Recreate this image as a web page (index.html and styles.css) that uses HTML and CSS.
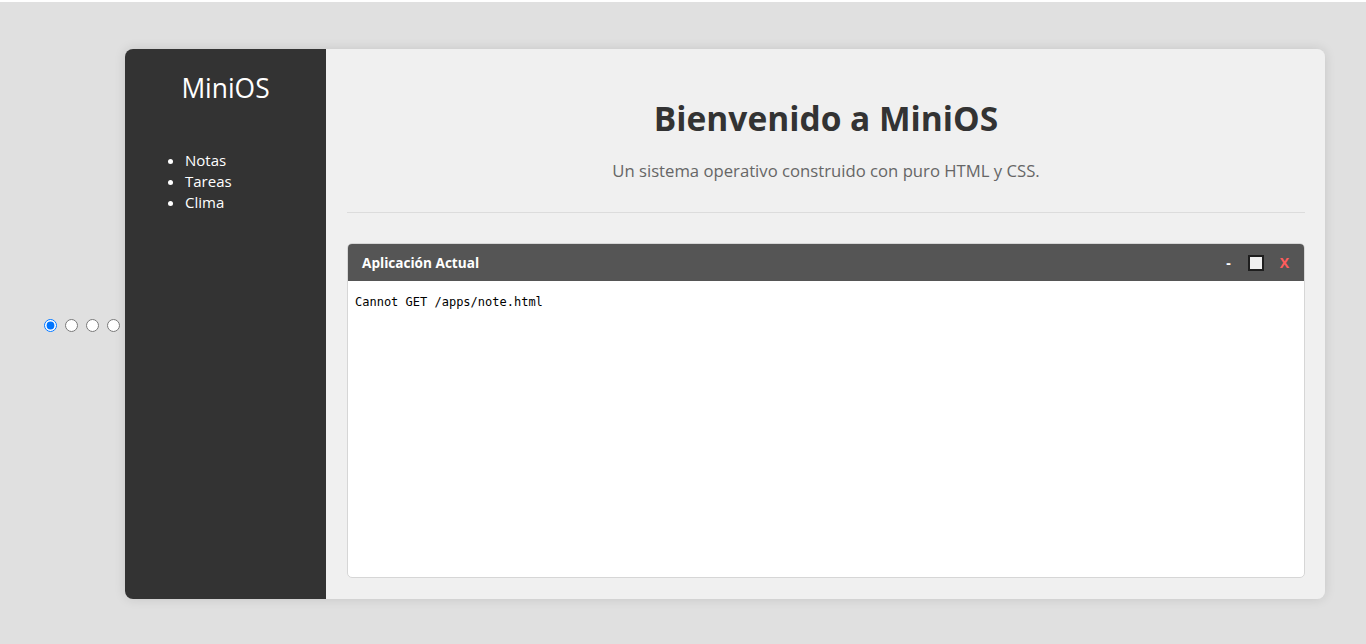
FILE: index.html
```html
<!DOCTYPE html>
<html lang="es">
<head>
<meta charset="utf-8">
<title>MiniOS</title>
<link rel="stylesheet" href="styles.css">
</head>
<body>
  <div class="switches">
    <input type="radio" name="app" checked>
    <input type="radio" name="app">
    <input type="radio" name="app">
    <input type="radio" name="app">
  </div>
  <div class="os">
    <aside class="sidebar">
      <h2 class="logo">MiniOS</h2>
      <ul class="menu">
        <li>Notas</li>
        <li>Tareas</li>
        <li>Clima</li>
      </ul>
    </aside>
    <main class="main">
      <header class="hero">
        <h1 class="title">Bienvenido a MiniOS</h1>
        <p class="subtitle">Un sistema operativo construido con puro HTML y CSS.</p>
      </header>
      <section class="window">
        <div class="window-bar">
          <span class="window-title">Aplicación Actual</span>
          <div class="controls">
            <span class="ctl-min">-</span>
            <span class="ctl-max"></span>
            <span class="ctl-close">X</span>
          </div>
        </div>
        <div class="window-body">
          <pre class="error">Cannot GET /apps/note.html</pre>
        </div>
      </section>
    </main>
  </div>
</body>
</html>
```
FILE: styles.css
```css
html {
  background: #ffffff;
}
body {
  box-sizing: border-box;
  margin: 2px 0 0;
  padding-top: 2px;
  min-height: calc(100vh - 2px);
  background: #e0e0e0;
  display: flex;
  justify-content: center;
  align-items: center;
  font-family: "Open Sans", "Noto Sans", sans-serif;
}
.switches {
  display: flex;
  align-items: center;
  margin: 0 2px 0 -2px;
}
.switches input {
  margin: 3px 3px 0 5px;
  width: 13px;
  height: 13px;
}
.os {
  width: 1200px;
  height: 550px;
  display: flex;
  border-radius: 8px;
  overflow: hidden;
  box-shadow: 0 0 12px rgba(0, 0, 0, 0.12);
}
.sidebar {
  width: 201px;
  flex: none;
  background: #333333;
  color: #ffffff;
}
.logo {
  margin: 21px 0 0;
  text-align: center;
  font-weight: 400;
  font-size: 26.4px;
  line-height: 36px;
}
.menu {
  margin: 44px 0 0;
  padding-left: 60px;
  font-size: 15px;
  line-height: 21px;
}
.main {
  flex: 1;
  background: #f0f0f0;
  padding: 20px 20px 21px 21px;
  display: flex;
  flex-direction: column;
}
.hero {
  text-align: center;
  border-bottom: 1px solid #dcdcdc;
  padding-bottom: 29px;
  margin-bottom: 30px;
}
.title {
  margin: 26px 0 0;
  font-size: 33.5px;
  line-height: 46px;
  font-weight: 700;
  color: #333333;
}
.subtitle {
  margin: 18px 0 0;
  font-size: 16.7px;
  line-height: 24px;
  color: #666666;
}
.window {
  flex: 1;
  display: flex;
  flex-direction: column;
  background: #ffffff;
  border: 1px solid #d6d6d6;
  border-radius: 5px;
  overflow: hidden;
}
.window-bar {
  height: 37px;
  flex: none;
  background: #555555;
  color: #ffffff;
  display: flex;
  align-items: center;
  justify-content: space-between;
  padding: 0 15px 0 14px;
}
.window-title {
  font-size: 13.6px;
  font-weight: 700;
}
.controls {
  display: flex;
  align-items: center;
  font-size: 14px;
  font-weight: 700;
}
.ctl-max {
  width: 12px;
  height: 12px;
  margin: 0 16px 0 17px;
  background: #f0f0f0;
  border: 2px solid #1e1e1e;
}
.ctl-close {
  color: #ff5c5c;
}
.window-body {
  flex: 1;
}
.error {
  margin: 11px 8px 8px 7px;
  font-family: "DejaVu Sans Mono", "Liberation Mono", monospace;
  font-size: 12px;
  line-height: 20px;
  color: #000000;
}
```
